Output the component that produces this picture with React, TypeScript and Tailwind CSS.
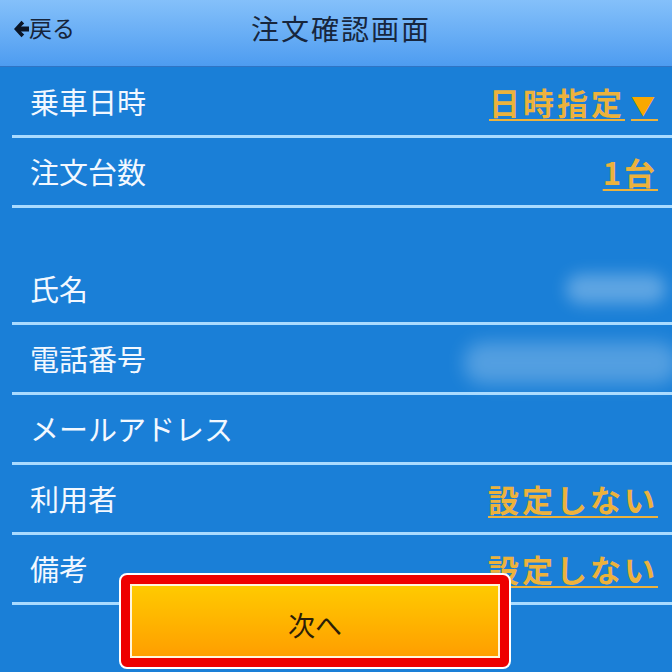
import React from 'react';

const jp = { fontFamily: '"Noto Sans CJK JP", "Noto Sans", sans-serif' };

function Row({ label, children }: { label: string; children?: React.ReactNode }) {
  return (
    <div className="ml-[12px] flex h-[70px] items-center justify-between border-b-[3px] border-[#a9dbff] pl-[18px] pr-[14px]">
      <span className="text-[29px] leading-none text-[#f2f8ff]">{label}</span>
      {children}
    </div>
  );
}

function Value({ children }: { children: React.ReactNode }) {
  return (
    <span className="text-[31px] font-bold leading-none tracking-[3px] text-[#ecb23c] underline decoration-[2px] underline-offset-[4px]">
      {children}
    </span>
  );
}

export default function App() {
  return (
    <div className="relative h-[672px] w-[672px] overflow-hidden bg-[#1a7fd7]" style={jp}>
      {/* Header */}
      <div className="relative flex h-[67px] justify-center border-b border-[#2f74c4] bg-gradient-to-b from-[#84c0fa] to-[#4d9cf0] pt-[14px]">
        <div className="absolute left-[14px] top-[16px] flex items-center text-[#16243a]">
          <svg width="15" height="18" viewBox="0 0 15 18" className="mt-[2px]">
            <path d="M0 9 L7.5 0.8 L10.2 3.4 L7 6.4 H15 V11.6 H7 L10.2 14.6 L7.5 17.2 Z" fill="#0b1526" />
          </svg>
          <span className="text-[23px] leading-none">戻る</span>
        </div>
        <h1 className="ml-[10px] text-[28px] font-normal leading-none tracking-[2px] text-[#17263d]">注文確認画面</h1>
      </div>

      {/* List */}
      <div className="pt-[1px]">
        <Row label="乗車日時">
          <Value>
            日時指定<span className="ml-[6px] text-[24px] text-[#f8a800]">▼</span>
          </Value>
        </Row>
        <Row label="注文台数">
          <Value>1台</Value>
        </Row>

        <div className="h-[47px]" />

        <Row label="氏名">
          <div className="mr-[-8px] h-[30px] w-[100px] rounded-full bg-white/30 blur-[8px]" />
        </Row>
        <Row label="電話番号">
          <div className="mr-[-20px] mt-[8px] h-[42px] w-[214px] rounded-[20px] bg-white/25 blur-[9px]" />
        </Row>
        <Row label="メールアドレス" />
        <Row label="利用者">
          <Value>設定しない</Value>
        </Row>
        <Row label="備考">
          <Value>設定しない</Value>
        </Row>
      </div>

      {/* Next button with highlight */}
      <div className="absolute left-[119px] top-[573px] h-[96px] w-[392px] rounded-[8px] border-2 border-white bg-[#ee0000] p-[9px]">
        <div className="flex h-full w-full items-center justify-center border-2 border-[#fff6dc] bg-gradient-to-b from-[#ffca00] to-[#ff9e00] pt-[6px]">
          <span className="text-[27px] leading-none text-[#2c1e08]">次へ</span>
        </div>
      </div>
    </div>
  );
}
